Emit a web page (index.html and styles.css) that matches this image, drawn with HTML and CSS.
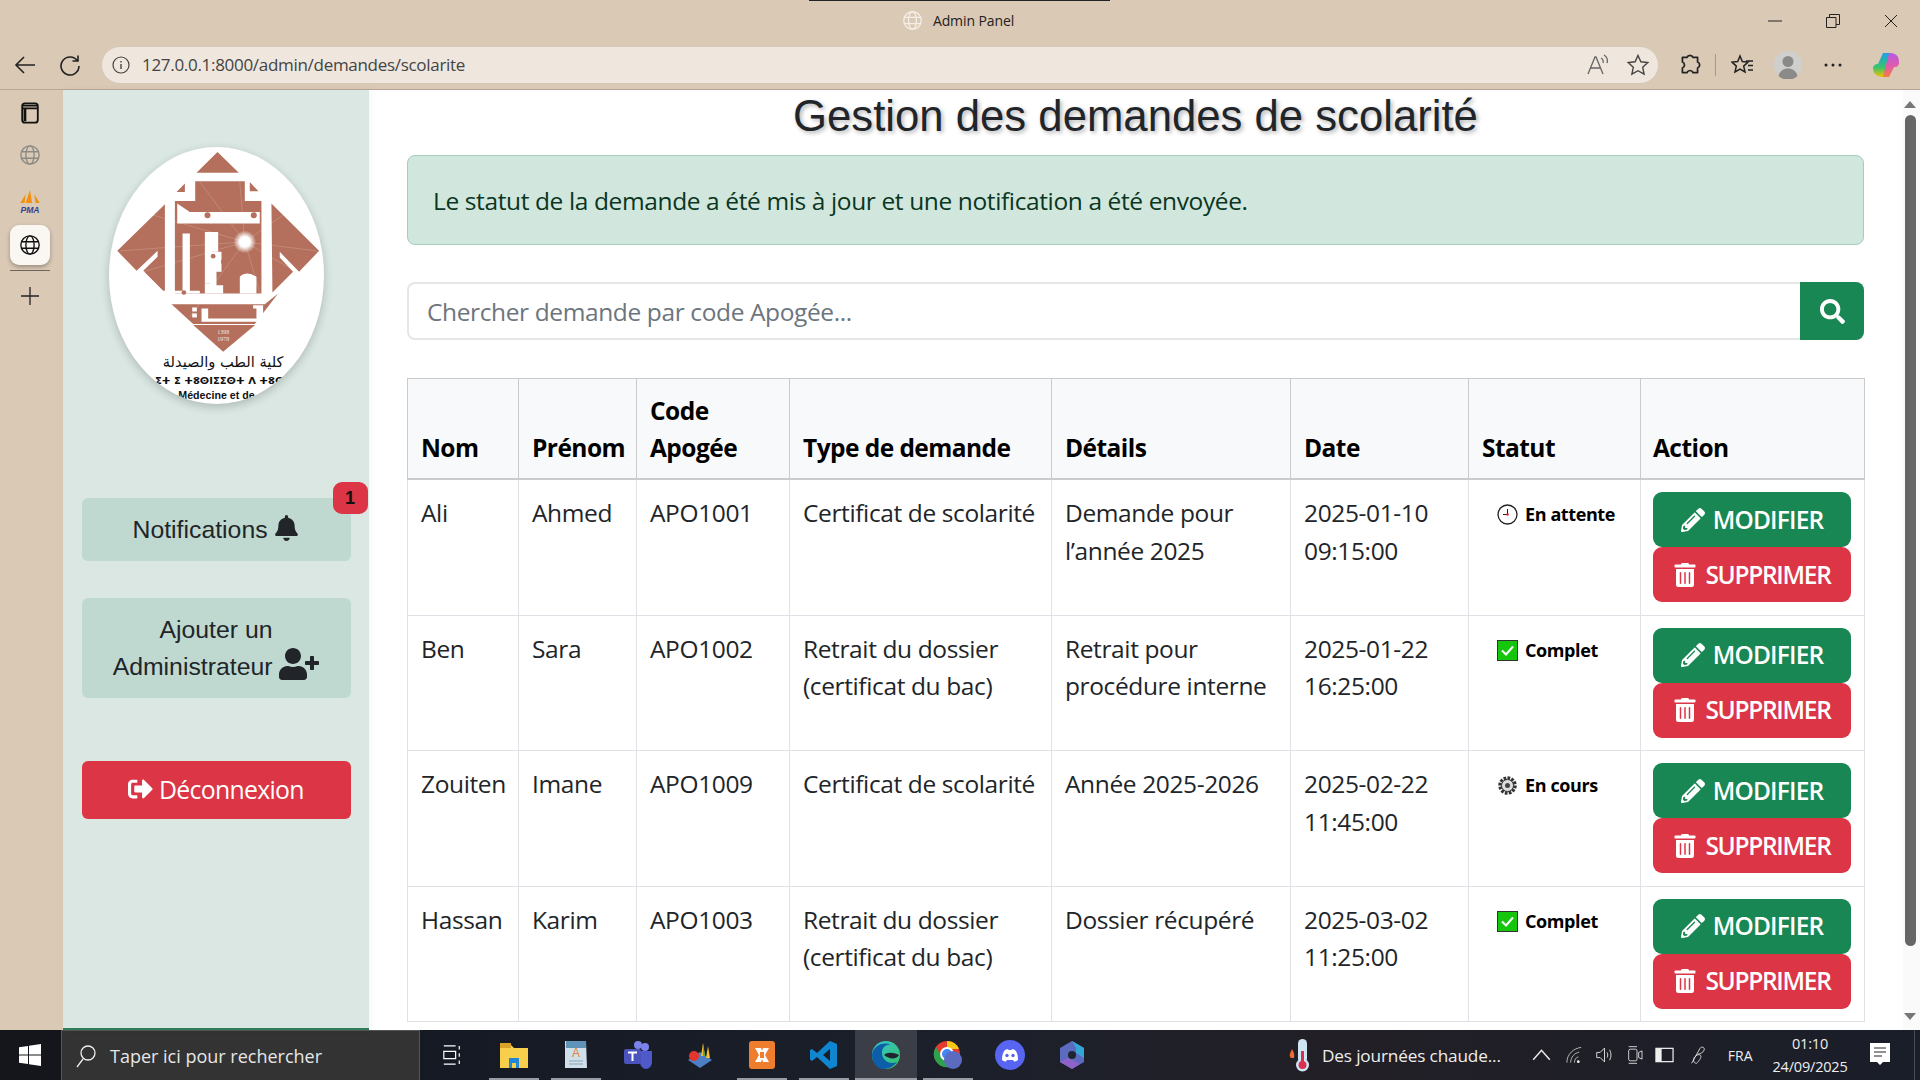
FILE: index.html
```html
<!DOCTYPE html>
<html lang="fr">
	<head>
		<meta charset="UTF-8" />
		<meta name="viewport" content="width=device-width, initial-scale=1.0" />
		<title>Admin Panel</title>
		<link rel="stylesheet" href="styles.css">
	</head>
	<body>
		<!-- icons used more than once -->
		<svg class="defs" aria-hidden="true">
			<symbol id="i-pen" viewBox="0 0 512 512"><path d="M497.9 142.1l-46.1 46.1c-4.7 4.7-12.3 4.7-17 0l-111-111c-4.7-4.7-4.7-12.3 0-17l46.1-46.1c18.7-18.7 49.1-18.7 67.9 0l60.1 60.1c18.8 18.7 18.8 49.1 0 67.9zM284.2 99.8L21.6 362.4.4 483.9c-2.9 16.4 11.4 30.6 27.8 27.8l121.5-21.3 262.6-262.6c4.7-4.7 4.7-12.3 0-17l-111-111c-4.8-4.7-12.4-4.7-17.1 0zM124.1 339.9c-5.5-5.5-5.5-14.3 0-19.8l154-154c5.5-5.5 14.3-5.5 19.8 0s5.5 14.3 0 19.8l-154 154c-5.5 5.5-14.3 5.5-19.8 0zM88 424h48v36.3l-64.5 11.3-31.1-31.1L51.7 376H88v48z"/></symbol>
			<symbol id="i-trash" viewBox="0 0 448 512"><path d="M32 464a48 48 0 0 0 48 48h288a48 48 0 0 0 48-48V128H32zm272-256a16 16 0 0 1 32 0v224a16 16 0 0 1-32 0zm-96 0a16 16 0 0 1 32 0v224a16 16 0 0 1-32 0zm-96 0a16 16 0 0 1 32 0v224a16 16 0 0 1-32 0zM432 32H312l-9.4-18.7A24 24 0 0 0 281.1 0H166.8a23.72 23.72 0 0 0-21.4 13.3L136 32H16A16 16 0 0 0 0 48v32a16 16 0 0 0 16 16h416a16 16 0 0 0 16-16V48a16 16 0 0 0-16-16z"/></symbol>
			<symbol id="i-globe" viewBox="0 0 24 24"><g fill="none" stroke="currentColor" stroke-width="1.5"><circle cx="12" cy="12" r="10"/><ellipse cx="12" cy="12" rx="4.5" ry="10"/><path d="M2.8 8.5h18.4M2.8 15.5h18.4"/></g></symbol>
			<symbol id="i-check" viewBox="0 0 21 21"><rect x=".5" y=".5" width="20" height="20" fill="#16c60c" stroke="#333"/><path d="M5 10.5l4 4 7-8" fill="none" stroke="#fff" stroke-width="2"/></symbol>
		</svg>

		<header class="chrome">
			<div class="titlebar">
				<span class="tab-mark"></span>
				<div class="title-center">
					<svg class="title-globe"><use href="#i-globe"/></svg>
					<span>Admin Panel</span>
				</div>
				<div class="win-btns">
					<svg viewBox="0 0 14 14"><path d="M0 7h14" stroke="#222" fill="none"/></svg>
					<svg viewBox="0 0 14 14"><path d="M.5 3.5h9.5v10H.5zM3.5 3.5V.5h10v10H10" stroke="#222" fill="none"/></svg>
					<svg viewBox="0 0 14 14"><path d="M1 1l12 12M13 1L1 13" stroke="#222" fill="none"/></svg>
				</div>
			</div>
			<div class="toolbar">
				<svg class="tool-ico back" viewBox="0 0 22 22"><path d="M21 11H2M10 3l-8 8 8 8" fill="none" stroke="#222" stroke-width="1.6"/></svg>
				<svg class="tool-ico reload" viewBox="0 0 22 22"><path d="M18.5 7A9 9 0 1 0 20 12M19 1.5V7h-5.5" fill="none" stroke="#222" stroke-width="1.6"/></svg>
				<div class="addressbar">
					<svg class="info-ico" viewBox="0 0 18 18"><circle cx="9" cy="9" r="8" fill="none" stroke="#444" stroke-width="1.2"/><path d="M9 8v5M9 5v1.6" stroke="#444" stroke-width="1.4"/></svg>
					<span class="url">127.0.0.1:8000/admin/demandes/scolarite</span>
					<svg class="addr-ico" viewBox="0 0 24 24"><path d="M2 21L9 4h1l7 17M4.5 15h10" fill="none" stroke="#666" stroke-width="1.3"/><path d="M15 5c2 1 2.500 3 2 5M18 2c3 2 4 5 3 8" fill="none" stroke="#666" stroke-width="1.3"/></svg>
					<svg class="addr-ico" viewBox="0 0 24 24"><path d="M12 2.500l2.900 6.300 6.900.8-5.100 4.700 1.400 6.800-6.100-3.400-6.100 3.400 1.400-6.800-5.100-4.700 6.900-.8z" fill="none" stroke="#444" stroke-width="1.4"/></svg>
				</div>
				<svg class="tool-ico ext" viewBox="0 0 24 24"><path d="M5 5h4.200a3 3 0 0 1 5.600 0H19v4.200a3 3 0 0 1 0 5.600V19h-4.200a3 3 0 0 0-5.600 0H5v-4.200a3 3 0 0 0 0-5.600z" fill="none" stroke="#222" stroke-width="1.6" stroke-linejoin="round"/></svg>
				<span class="tool-sep"></span>
				<svg class="tool-ico fav" viewBox="0 0 24 24"><path d="M9 3l2.300 5.500 5.700.6-4.300 4 1.300 5.900-5-3-5 3 1.300-5.900-4.300-4 5.700-.6z" fill="none" stroke="#222" stroke-width="1.5"/><path d="M15 8h7M17 12.500h5M17 17h5" stroke="#222" stroke-width="1.5"/></svg>
				<svg class="tool-ico avatar" viewBox="0 0 28 28"><circle cx="14" cy="14" r="14" fill="#cfcfcd"/><circle cx="14" cy="10.500" r="5.500" fill="#8a8a88"/><path d="M4.500 25c1-5 5-7.500 9.500-7.500s8.500 2.500 9.500 7.500a14 14 0 0 1-19 0z" fill="#8a8a88"/></svg>
				<svg class="tool-ico dots" viewBox="0 0 18 4"><circle cx="2" cy="2" r="1.500" fill="#222"/><circle cx="9" cy="2" r="1.500" fill="#222"/><circle cx="16" cy="2" r="1.500" fill="#222"/></svg>
				<svg class="tool-ico copilot" viewBox="0 0 28 28">
					<defs>
						<linearGradient id="cop1" x1="0" y1="0" x2="0" y2="1"><stop offset="0" stop-color="#1f9fe8"/><stop offset=".6" stop-color="#37c56b"/><stop offset="1" stop-color="#f2c200"/></linearGradient>
						<linearGradient id="cop2" x1="0" y1="0" x2="0" y2="1"><stop offset="0" stop-color="#b25be0"/><stop offset=".6" stop-color="#e85aa5"/><stop offset="1" stop-color="#f0803a"/></linearGradient>
					</defs>
					<path d="M11 2h7l-5 24c-6 0-11-1-12-8 0-4 3-5 5-5z" fill="url(#cop1)"/>
					<path d="M17 26h-6l6-24c6 0 10 2 10 9 0 5-3 5-5 5z" fill="url(#cop2)"/>
				</svg>
			</div>
		</header>

		<div class="window">
			<nav class="rail">
				<svg class="rail-ico rail-panel" viewBox="0 0 20 24"><rect x="1.500" y="1.500" width="17" height="21" rx="3" fill="none" stroke="#111" stroke-width="2"/><path d="M1.500 7h17M1.500 4h17" stroke="#111" stroke-width="2"/><path d="M3 7h3v14H3z" fill="#111"/></svg>
				<svg class="rail-ico rail-faded"><use href="#i-globe"/></svg>
				<svg class="rail-ico rail-pma" viewBox="0 0 24 24">
					<path d="M12 0l2 12H8zM8 4l-1 8H3zM16 4l1 8h4z" fill="#f29111"/>
					<text x="12" y="21" class="pma-text">PMA</text>
				</svg>
				<div class="rail-active"><svg class="rail-ico"><use href="#i-globe"/></svg></div>
				<span class="rail-line"></span>
				<svg class="rail-ico rail-plus" viewBox="0 0 20 20"><path d="M10 1v18M1 10h18" stroke="#222" stroke-width="1.300"/></svg>
			</nav>

			<aside class="sidebar">
				<div class="logo">
					<svg viewBox="58 50 644 772" width="215" height="257">
						<defs>
							<radialGradient id="sun"><stop offset=".45" stop-color="#fff"/><stop offset="1" stop-color="#fff" stop-opacity="0"/></radialGradient>
						</defs>
						<g fill="#b4705c">
							<path d="M383 65l64 62H320z"/>
							<path d="M260 185l25-25v25zM480 155l26 28h-26z"/>
							<path d="M225 222L82 362l58 60 63-60v18l-43 42 65 65z"/>
							<path d="M545 220l143 142-60 63-58-60v17l40 43-62 62z"/>
							<path d="M316 153h149v59h50v278h-260V212h61z"/>
							<path d="M245 522h280l40-32-70 92H310z"/>
							<path d="M310 585h186l-96 80z"/>
						</g>
						<g stroke="#fff" stroke-opacity=".35" stroke-width="1.500">
							<path d="M465 335L90 362M465 335L140 240M465 335L330 155M465 335L450 155M465 335L680 362M465 335L600 240M465 335L620 425M465 335L520 520M465 335L160 425M465 335L300 560"/>
						</g>
						<g fill="#fff">
							<path d="M262 220l38 25h210v35H262z"/>
							<path d="M278 310h22v172h30v8H215v-8h63zM345 305h40v60h-20v95h-20z"/>
							<path d="M355 365h40v60h-15v40h20v25h-55v-30h15v-55h-5z"/>
							<path d="M430 490h20v-50q20-20 50 0v50h-15z" />
							<path d="M335 535h20v30h145v-30h-10v-10h30v50H335z"/>
						</g>
						<circle cx="353" cy="255" r="9" fill="#b4705c"/>
						<circle cx="492" cy="255" r="9" fill="#b4705c"/>
						<circle cx="370" cy="378" r="7" fill="#b4705c"/>
						<circle cx="400" cy="395" r="7" fill="#b4705c"/>
						<circle cx="282" cy="487" r="7" fill="#b4705c"/>
						<rect x="307" y="532" width="14" height="12" fill="#fff"/>
						<rect x="307" y="550" width="14" height="12" fill="#fff"/>
						<circle cx="465" cy="335" r="34" fill="url(#sun)"/>
						<text x="400" y="612" class="logo-year">1398</text>
						<text x="400" y="632" class="logo-year">1978</text>
						<text x="400" y="710" class="logo-ar">كلية الطب والصيدلة</text>
						<text x="395" y="763" class="logo-tf">ⵉⵜ ⵉ ⵜⵓⵙⵏⵉⵉⵙⵜ ⴷ ⵜⵓⵙⵏ</text>
						<text x="380" y="806" class="logo-fr">Médecine et de</text>
					</svg>
				</div>

				<a class="side-btn side-notif">
					Notifications
					<svg class="side-ico" viewBox="0 0 448 512"><path d="M224 512c35.32 0 63.97-28.65 63.97-64H160.03c0 35.35 28.65 64 63.97 64zm215.39-149.71c-19.32-20.76-55.47-51.99-55.47-154.29 0-77.7-54.48-139.9-127.94-155.16V32c0-17.67-14.32-32-31.98-32s-31.98 14.33-31.98 32v20.84C118.56 68.1 64.08 130.3 64.08 208c0 102.3-36.15 133.53-55.47 154.29-6 6.45-8.66 14.16-8.61 21.71.11 16.4 12.98 32 32.1 32h383.8c19.12 0 32-15.6 32.1-32 .05-7.55-2.61-15.27-8.61-21.71z"/></svg>
					<span class="side-badge">1</span>
				</a>
				<a class="side-btn side-add">
					Ajouter un<br>Administrateur
					<svg class="side-ico side-ico-user" viewBox="0 0 640 512"><path d="M624 208h-64v-64c0-8.8-7.2-16-16-16h-32c-8.8 0-16 7.2-16 16v64h-64c-8.8 0-16 7.2-16 16v32c0 8.8 7.2 16 16 16h64v64c0 8.8 7.2 16 16 16h32c8.8 0 16-7.2 16-16v-64h64c8.8 0 16-7.2 16-16v-32c0-8.8-7.2-16-16-16zm-400 48c70.7 0 128-57.3 128-128S294.700 0 224 0 96 57.300 96 128s57.300 128 128 128zm89.600 32h-16.700c-22.200 10.200-46.900 16-72.900 16s-50.600-5.800-72.900-16h-16.700C60.200 288 0 348.200 0 422.400V464c0 26.500 21.500 48 48 48h352c26.500 0 48-21.500 48-48v-41.600c0-74.200-60.200-134.400-134.400-134.400z"/></svg>
				</a>
				<a class="side-btn side-logout">
					<svg class="side-ico" viewBox="0 0 512 512"><path d="M497 273L329 441c-15 15-41 4.500-41-17v-96H152c-13.300 0-24-10.700-24-24v-96c0-13.300 10.700-24 24-24h136V88c0-21.400 25.900-32 41-17l168 168c9.300 9.400 9.300 24.600 0 34zM192 436v-40c0-6.600-5.400-12-12-12H96c-17.700 0-32-14.300-32-32V160c0-17.700 14.300-32 32-32h84c6.600 0 12-5.400 12-12V76c0-6.600-5.400-12-12-12H96c-53 0-96 43-96 96v192c0 53 43 96 96 96h84c6.600 0 12-5.400 12-12z"/></svg>
					Déconnexion
				</a>
			</aside>

			<main class="main">
				<div class="content">
					<h1 class="page-title">Gestion des demandes de scolarité</h1>
					<div class="alert">Le statut de la demande a été mis à jour et une notification a été envoyée.</div>
					<form class="search">
						<input class="search-input" placeholder="Chercher demande par code Apogée...">
						<button class="search-btn" type="button">
							<svg viewBox="0 0 512 512"><path d="M505 442.700L405.300 343c-4.500-4.500-10.600-7-17-7H372c27.600-35.300 44-79.700 44-128C416 93.100 322.900 0 208 0S0 93.100 0 208s93.100 208 208 208c48.300 0 92.700-16.400 128-44v16.300c0 6.400 2.500 12.500 7 17l99.700 99.700c9.400 9.400 24.600 9.400 33.900 0l28.300-28.300c9.400-9.400 9.400-24.600.1-34zM208 336c-70.700 0-128-57.200-128-128 0-70.700 57.200-128 128-128 70.700 0 128 57.200 128 128 0 70.700-57.200 128-128 128z"/></svg>
						</button>
					</form>
					<table class="demandes">
						<colgroup>
							<col class="c-nom"><col class="c-prenom"><col class="c-code"><col class="c-type">
							<col class="c-details"><col class="c-date"><col class="c-statut"><col class="c-action">
						</colgroup>
						<thead>
							<tr>
								<th>Nom</th><th>Prénom</th><th>Code Apogée</th><th>Type de demande</th>
								<th>Détails</th><th>Date</th><th>Statut</th><th>Action</th>
							</tr>
						</thead>
						<tbody>
							<tr>
								<td>Ali</td><td>Ahmed</td><td>APO1001</td><td>Certificat de scolarité</td>
								<td>Demande pour l’année 2025</td><td>2025-01-10 09:15:00</td>
								<td>
									<span class="statut">
										<svg viewBox="0 0 21 21"><circle cx="10.500" cy="10.500" r="9.500" fill="#fff" stroke="#222" stroke-width="1.300"/><path d="M10.500 5v5.500H6" fill="none" stroke="#222"/><circle cx="10.500" cy="10.500" r="1.300" fill="#d22"/></svg>
										En attente
									</span>
								</td>
								<td class="td-action">
									<a class="btn btn-edit"><svg><use href="#i-pen"/></svg>MODIFIER</a>
									<a class="btn btn-del"><svg><use href="#i-trash"/></svg>SUPPRIMER</a>
								</td>
							</tr>
							<tr>
								<td>Ben</td><td>Sara</td><td>APO1002</td><td>Retrait du dossier (certificat du bac)</td>
								<td>Retrait pour procédure interne</td><td>2025-01-22 16:25:00</td>
								<td><span class="statut"><svg><use href="#i-check"/></svg>Complet</span></td>
								<td class="td-action">
									<a class="btn btn-edit"><svg><use href="#i-pen"/></svg>MODIFIER</a>
									<a class="btn btn-del"><svg><use href="#i-trash"/></svg>SUPPRIMER</a>
								</td>
							</tr>
							<tr>
								<td>Zouiten</td><td>Imane</td><td>APO1009</td><td>Certificat de scolarité</td>
								<td>Année 2025-2026</td><td>2025-02-22 11:45:00</td>
								<td>
									<span class="statut">
										<svg viewBox="0 0 21 21"><circle cx="10.500" cy="10.500" r="7.500" fill="#ddd" stroke="#333" stroke-width="3.500" stroke-dasharray="2.600 1.300"/><circle cx="10.500" cy="10.500" r="6" fill="#ddd" stroke="#333"/><circle cx="10.500" cy="10.500" r="2.500" fill="#444"/></svg>
										En cours
									</span>
								</td>
								<td class="td-action">
									<a class="btn btn-edit"><svg><use href="#i-pen"/></svg>MODIFIER</a>
									<a class="btn btn-del"><svg><use href="#i-trash"/></svg>SUPPRIMER</a>
								</td>
							</tr>
							<tr>
								<td>Hassan</td><td>Karim</td><td>APO1003</td><td>Retrait du dossier (certificat du bac)</td>
								<td>Dossier récupéré</td><td>2025-03-02 11:25:00</td>
								<td><span class="statut"><svg><use href="#i-check"/></svg>Complet</span></td>
								<td class="td-action">
									<a class="btn btn-edit"><svg><use href="#i-pen"/></svg>MODIFIER</a>
									<a class="btn btn-del"><svg><use href="#i-trash"/></svg>SUPPRIMER</a>
								</td>
							</tr>
						</tbody>
					</table>
				</div>
				<div class="scrollbar">
					<span class="arrow-up"></span>
					<span class="thumb"></span>
					<span class="arrow-down"></span>
				</div>
			</main>
		</div>

		<footer class="taskbar">
			<div class="start">
				<svg viewBox="0 0 22 22"><path d="M0 3.200l9-1.300v8.500H0zM10 1.800L22 0v10.400H10zM0 11.500h9V20l-9-1.300zM10 11.500h12V22l-12-1.800z" fill="#fff"/></svg>
			</div>
			<div class="task-search">
				<svg viewBox="0 0 20 24"><circle cx="12" cy="9" r="7" fill="none" stroke="#eee" stroke-width="1.300"/><path d="M7 15l-6 8" stroke="#eee" stroke-width="1.300"/></svg>
				<span>Taper ici pour rechercher</span>
			</div>
			<div class="task-apps">
				<div class="app"><svg viewBox="0 0 22 24"><path d="M2 2h13M2 22h13M2 8h13v8H2zM19 2v4M19 10v4M19 18v4" fill="none" stroke="#fff" stroke-width="1.300"/></svg></div>
				<div class="app open"><svg viewBox="0 0 30 30"><path d="M1 5h11l3 3h14v20H1z" fill="#f8cf4a"/><path d="M1 3h11v5H1z" fill="#d9a32a"/><path d="M10 18h10v10h-3v-5h-4v5h-3z" fill="#1f87d6"/></svg></div>
				<div class="app open"><svg viewBox="0 0 30 30"><path d="M4 1h21l1 27H4z" fill="#cfe0ea"/><path d="M5 1h20v7H5z" fill="#5f93b8"/><text x="15" y="17" class="doc-a">A</text><path d="M8 21h14M8 24h14" stroke="#8aa6b8"/></svg></div>
				<div class="app"><svg viewBox="0 0 30 30"><circle cx="22" cy="7" r="4" fill="#7b83eb"/><circle cx="15" cy="5" r="4" fill="#7b83eb"/><path d="M17 11h12v11c0 4-3 7-6 7s-6-3-6-7z" fill="#5059c9"/><rect x="1" y="9" width="17" height="15" rx="2" fill="#4b53bc"/><path d="M5 12.500h9M9.500 12.500V21" stroke="#fff" stroke-width="2"/></svg></div>
				<div class="app"><svg viewBox="0 0 30 30"><path d="M3 20l12-8 12 8-12 8z" fill="#4d7fc4"/><path d="M18 3l2 13h-4zM23 6l2 12h-4z" fill="#f2c230"/><path d="M18 3l2 13h-2z" fill="#4caf50"/><circle cx="9" cy="16" r="5" fill="#e2362c"/></svg></div>
				<div class="app open"><svg viewBox="0 0 30 30"><rect x="2" y="1" width="26" height="28" rx="3" fill="#ee7d2e"/><path d="M8 8h6l1 3 1-3h6l-4 7 4 7h-6l-1-3-1 3H8l4-7z" fill="#fff"/><rect x="13" y="12" width="4" height="6" fill="#ee7d2e"/></svg></div>
				<div class="app open"><svg viewBox="0 0 30 30"><path d="M21 1l7 3v22l-7 3-13-12-5 4-2-1.500V10L3 9l5 4zM21 9l-7 6 7 6z" fill="#0e87d0"/></svg></div>
				<div class="app active"><svg viewBox="0 0 30 30"><defs><linearGradient id="edge" x1="0" y1="0" x2="1" y2="1"><stop offset="0" stop-color="#36c6d3"/><stop offset="1" stop-color="#35c163"/></linearGradient></defs><circle cx="15" cy="15" r="14" fill="url(#edge)"/><path d="M1 15C2 6 12 1 20 5c-6-1-9 3-9 8 0 7 7 12 15 9-4 5-9 7-14 7C6 29 1 22 1 15z" fill="#0c5ea8"/><path d="M13 15c3-3 9-3 15 0-2 4-9 5-15 0z" fill="#1f2630"/></svg></div>
				<div class="app open"><svg viewBox="0 0 30 30"><circle cx="14" cy="14" r="13" fill="#e33b2e"/><path d="M14 1a13 13 0 0 1 12 8H14z" fill="#f5c518"/><path d="M3 7l7 12 6 8A13 13 0 0 1 3 7z" fill="#2ca24c"/><circle cx="14" cy="14" r="6" fill="#4285f4" stroke="#fff" stroke-width="2"/><circle cx="20" cy="20" r="9" fill="#5b6bc0"/></svg></div>
				<div class="app"><svg viewBox="0 0 30 30"><circle cx="15" cy="15" r="15" fill="#5865f2"/><path d="M7 20c0-5 1-8 3-10 2-1 3-1 3-1l.5 1h3l.5-1s1 0 3 1c2 2 3 5 3 10-1.500 1-3 1.500-4 1.500l-1-1.500H12l-1 1.500C10 21.500 8.500 21 7 20z" fill="#fff"/><circle cx="12" cy="15.500" r="1.700" fill="#5865f2"/><circle cx="18" cy="15.500" r="1.700" fill="#5865f2"/></svg></div>
				<div class="app"><svg viewBox="0 0 30 30"><path d="M15 1l12 7v14l-12 7-12-7V8z" fill="#5c6bc0"/><path d="M15 1l12 7v10l-8-5V8z" fill="#35a7d6"/><path d="M3 22l12 7 8-5-12-6z" fill="#8d63c9"/><circle cx="15" cy="15" r="4" fill="#1f2630"/></svg></div>
			</div>
			<div class="task-right">
				<div class="weather">
					<svg viewBox="0 0 24 34"><path d="M4 20c-3-3 0-6 1-9 1 2 3 4 2 9z" fill="#ef6c2e"/><rect x="11" y="1" width="9" height="24" rx="4.500" fill="#cfe6f3"/><circle cx="15.500" cy="27" r="6.500" fill="#cfe6f3"/><rect x="14" y="13" width="3" height="12" fill="#d9304f"/><circle cx="15.500" cy="27" r="4" fill="#d9304f"/></svg>
					<span>Des journées chaude...</span>
				</div>
				<div class="tray">
					<svg class="tray-caret" viewBox="0 0 16 10"><path d="M1 9l7-8 7 8" fill="none" stroke="#eee" stroke-width="1.200"/></svg>
					<svg viewBox="0 0 20 20"><path d="M2 18C2 9 9 3 17 2M6 18c0-6 4-10 9-11M10 18c0-3 1-5 4-6" fill="none" stroke="#bbb"/><circle cx="14" cy="17" r="1.500" fill="#eee"/></svg>
					<svg viewBox="0 0 22 22"><path d="M2 8h4l5-5v16l-5-5H2z" fill="none" stroke="#eee"/><path d="M14 8c1 2 1 4 0 6M17 5c2 4 2 8 0 12" fill="none" stroke="#eee"/></svg>
					<svg viewBox="0 0 20 24"><rect x="3" y="5" width="10" height="14" rx="2" fill="none" stroke="#eee"/><path d="M3 2h10M3 22h10M15 9l4-2v10l-4-2z" fill="none" stroke="#eee"/></svg>
					<svg viewBox="0 0 20 16"><rect x="1" y="1" width="18" height="14" fill="none" stroke="#eee" stroke-width="1.300"/><rect x="1" y="1" width="6" height="14" fill="#eee"/></svg>
					<svg class="tray-pen" viewBox="0 0 22 24"><path d="M4 22L14 4c2-3 6-1 5 2-1 3-5 5-8 5M10 22c-4 0-5-5-2-8s6-3 7-1-3 7-5 9" fill="none" stroke="#eee"/></svg>
				</div>
				<span class="lang">FRA</span>
				<div class="clock"><span>01:10</span><span>24/09/2025</span></div>
				<svg class="notif-ico" viewBox="0 0 20 24"><path d="M0 0h20v19h-7l-3 3-3-3H0z" fill="#fff"/><path d="M4 5h12M4 9h12M4 13h8" stroke="#222"/></svg>
				<span class="show-desktop"></span>
			</div>
		</footer>
	</body>
</html>
```

FILE: styles.css
```css
html, body {
	margin: 0;
	height: 100%;
	overflow: hidden;
}
body {
	display: flex;
	flex-direction: column;
	height: 1080px;
	background: #dac9b5;
	color: #212529;
	font-family: "Open Sans", "Noto Sans", sans-serif;
}
.defs {
	display: none;
}

/* browser chrome */
.chrome {
	height: 90px;
	box-sizing: border-box;
	border-bottom: 1px solid #b8a692;
	flex: none;
}
.titlebar {
	position: relative;
	height: 46px;
	display: flex;
	justify-content: center;
	align-items: center;
}
.tab-mark {
	position: absolute;
	top: 0;
	left: 809px;
	width: 301px;
	height: 1px;
	background: #222;
}
.title-center {
	display: flex;
	align-items: center;
	gap: 10px;
	font-size: 14px;
	letter-spacing: -0.1px;
	margin: -5px 4px 0 0;
	color: #222;
}
.title-globe {
	width: 21px;
	height: 21px;
	color: #f5efe7;
}
.win-btns {
	position: absolute;
	top: 14px;
	right: 22px;
	display: flex;
	gap: 44px;
}
.win-btns svg {
	width: 14px;
	height: 14px;
}
.toolbar {
	height: 38px;
	display: flex;
	align-items: center;
}
.tool-ico {
	flex: none;
}
.back {
	width: 22px;
	height: 22px;
	margin-left: 14px;
}
.reload {
	width: 22px;
	height: 22px;
	margin-left: 23px;
}
.addressbar {
	width: 1558px;
	height: 38px;
	box-sizing: border-box;
	margin-left: 20px;
	padding: 0 8px 0 10px;
	flex: none;
	display: flex;
	align-items: center;
	background: #efe7dd;
	border: 1px solid #d5c8b6;
	border-radius: 19px;
}
.info-ico {
	width: 18px;
	height: 18px;
}
.url {
	margin: -2px 0 0 12px;
	flex: 1;
	font-size: 17px;
	letter-spacing: -0.3px;
	color: #444;
}
.addr-ico {
	width: 24px;
	height: 24px;
	margin-left: 16px;
}
.ext {
	width: 26px;
	height: 26px;
	margin-left: 18px;
}
.tool-sep {
	width: 1px;
	height: 22px;
	margin-left: 12px;
	background: #a69988;
}
.fav {
	width: 24px;
	height: 24px;
	margin-left: 15px;
}
.avatar {
	width: 28px;
	height: 28px;
	margin-left: 19px;
}
.dots {
	width: 18px;
	height: 4px;
	margin-left: 22px;
}
.copilot {
	width: 28px;
	height: 28px;
	margin-left: 30px;
}

.window {
	flex: 1;
	display: flex;
	min-height: 0;
}

/* vertical tabs */
.rail {
	width: 63px;
	flex: none;
	display: flex;
	flex-direction: column;
	align-items: center;
	padding: 12px 3px 0 0;
	box-sizing: border-box;
}
.rail-ico {
	width: 22px;
	height: 22px;
	color: #111;
	flex: none;
	display: block;
}
.rail-faded {
	margin-top: 20px;
	color: #8b8a84;
}
.rail-pma {
	margin-top: 24px;
	width: 26px;
	height: 26px;
}
.pma-text {
	font-family: "Liberation Sans", sans-serif;
	font-size: 8px;
	font-weight: bold;
	font-style: italic;
	fill: #36418f;
	text-anchor: middle;
}
.rail-active {
	width: 40px;
	height: 40px;
	margin-top: 8.500px;
	display: flex;
	align-items: center;
	justify-content: center;
	background: #faf7f3;
	border-radius: 9px;
	box-shadow: 0 2px 4px rgba(0, 0, 0, 0.3);
}
.rail-line {
	width: 40px;
	height: 1px;
	margin-top: 5px;
	background: #6f655a;
}
.rail-plus {
	width: 20px;
	height: 20px;
	margin-top: 15px;
}

/* sidebar */
.sidebar {
	position: relative;
	width: 306px;
	flex: none;
	display: flex;
	flex-direction: column;
	align-items: center;
	box-sizing: border-box;
	padding-top: 57px;
	background: #dae7e2;
	border-bottom: 2px solid #2f7d5a;
	box-shadow: 2px 0 8px rgba(0, 0, 0, 0.04);
}
.logo {
	width: 215px;
	height: 257px;
	border-radius: 50%;
	overflow: hidden;
	background: #fff;
	box-shadow: 0 3px 10px rgba(0, 0, 0, 0.2);
	flex: none;
}
.logo svg {
	display: block;
}
.logo-year {
	font-family: "Liberation Serif", serif;
	font-size: 18px;
	fill: #f4e4dd;
	text-anchor: middle;
}
.logo-ar {
	font-family: "DejaVu Sans", sans-serif;
	font-size: 44px;
	fill: #111;
	text-anchor: middle;
}
.logo-tf {
	font-family: "DejaVu Sans", sans-serif;
	font-size: 30px;
	font-weight: bold;
	fill: #111;
	text-anchor: middle;
}
.logo-fr {
	font-family: "Liberation Sans", sans-serif;
	font-size: 32px;
	font-weight: bold;
	fill: #111;
	text-anchor: middle;
}
.side-btn {
	position: relative;
	width: 269px;
	box-sizing: border-box;
	display: block;
	text-align: center;
	border-radius: 6px;
	font-family: "Liberation Sans", sans-serif;
	font-size: 24.800px;
	line-height: 37px;
}
.side-notif {
	margin-top: 94px;
	height: 63px;
	padding-top: 13px;
	background: #c0d9d0;
}
.side-add {
	margin-top: 37px;
	height: 100px;
	padding-top: 13px;
	background: #c0d9d0;
}
.side-logout {
	margin-top: 63px;
	height: 58px;
	padding-top: 10px;
	background: #dc3545;
	color: #fff;
	font-family: "Open Sans", sans-serif;
	letter-spacing: -0.7px;
}
.side-ico {
	height: 26px;
	width: 25px;
	vertical-align: -3px;
	fill: currentColor;
}
.side-ico-user {
	width: 40px;
	height: 32px;
	vertical-align: -5px;
}
.side-badge {
	position: absolute;
	top: -16px;
	right: -17px;
	width: 35px;
	height: 32px;
	border-radius: 9px;
	background: #dc3545;
	color: #111;
	font-size: 18px;
	font-weight: bold;
	line-height: 32px;
	text-align: center;
}

/* page */
.main {
	flex: 1;
	display: flex;
	min-width: 0;
	background: #fff;
}
.content {
	flex: 1;
	min-width: 0;
	padding: 0 39px 0 38px;
	font-size: 24.5px;
	letter-spacing: -0.38px;
	line-height: 37.500px;
	color: #212529;
}
.page-title {
	margin: 0;
	height: 52px;
	font-family: "Liberation Sans", sans-serif;
	font-size: 43.700px;
	font-weight: normal;
	line-height: 52px;
	letter-spacing: 0;
	text-align: center;
	text-shadow: 2px 2px 4px rgba(0, 0, 0, 0.3);
}
.alert {
	margin-top: 13px;
	height: 90px;
	box-sizing: border-box;
	padding: 26px 25px;
	background: #d1e7dd;
	border: 1px solid #a3cfbb;
	border-radius: 8px;
	color: #0a3622;
}
.search {
	margin-top: 37px;
	display: flex;
	height: 58px;
}
.search-input {
	flex: 1;
	min-width: 0;
	box-sizing: border-box;
	padding: 2px 18px 0;
	border: 2px solid #e4e6e8;
	border-right: none;
	border-radius: 8px 0 0 8px;
	font: inherit;
	letter-spacing: inherit;
	outline: none;
}
.search-input::placeholder {
	color: #6c757d;
}
.search-btn {
	width: 64px;
	padding: 0;
	border: none;
	border-radius: 0 8px 8px 0;
	background: #198754;
}
.search-btn svg {
	width: 25px;
	height: 25px;
	fill: #fff;
	display: block;
	margin: 0 auto;
}
.demandes {
	margin-top: 38px;
	width: 1457px;
	table-layout: fixed;
	border-collapse: collapse;
}
.c-nom { width: 111px; }
.c-prenom { width: 118px; }
.c-code { width: 153px; }
.c-type { width: 262px; }
.c-details { width: 239px; }
.c-date { width: 178px; }
.c-statut { width: 172px; }
.c-action { width: 224px; }
.demandes th {
	padding: 12.500px 13px 11.500px;
	background: #f8f9fa;
	border: 2px solid #c9cbcd;
	border-width: 1px 1px 2px 1px;
	color: #000;
	font-weight: 700;
	letter-spacing: -0.55px;
	text-align: left;
	vertical-align: bottom;
}
.demandes th:last-child {
	padding-left: 12px;
}
.demandes td {
	padding: 14px 13px 12.500px;
	border: 1px solid #dee2e6;
	vertical-align: top;
}
.demandes .td-action {
	padding: 12px 13px 12.500px 12px;
}
.statut {
	display: flex;
	align-items: center;
	gap: 7px;
	margin: 2px 0 0 15px;
	font-size: 18px;
	font-weight: 700;
	letter-spacing: -0.4px;
	color: #000;
}
.statut svg {
	width: 21px;
	height: 21px;
	flex: none;
}
.btn {
	height: 55px;
	display: flex;
	align-items: center;
	justify-content: center;
	gap: 8px;
	border-radius: 9px;
	color: #fff;
	font-weight: 600;
	letter-spacing: -0.8px;
}
.btn svg {
	width: 24px;
	height: 24px;
	fill: #fff;
}
.btn-edit {
	background: #198754;
}
.btn-del {
	background: #dc3545;
	letter-spacing: -1.3px;
}

/* fake scrollbar */
.scrollbar {
	width: 17px;
	flex: none;
	display: flex;
	flex-direction: column;
	align-items: center;
	box-sizing: border-box;
	padding: 11px 3px 0 0;
	background: #fafafa;
}
.arrow-up {
	width: 0;
	height: 0;
	border: 6px solid transparent;
	border-top: none;
	border-bottom: 7px solid #777;
}
.thumb {
	width: 11px;
	height: 831px;
	margin-top: 7px;
	border-radius: 6px;
	background: #666;
}
.arrow-down {
	width: 0;
	height: 0;
	margin-top: 67px;
	border: 6px solid transparent;
	border-bottom: none;
	border-top: 7px solid #777;
}

/* windows taskbar */
.taskbar {
	height: 50px;
	flex: none;
	display: flex;
	background: linear-gradient(90deg, #10141d, #1c202b 50%, #221f26 70%, #1a1e29);
	color: #eee;
}
.start {
	width: 61px;
	flex: none;
	display: flex;
	align-items: center;
	justify-content: center;
	padding-right: 2px;
	box-sizing: border-box;
	background: #14161c;
}
.start svg {
	width: 22px;
	height: 22px;
}
.task-search {
	width: 359px;
	flex: none;
	box-sizing: border-box;
	display: flex;
	align-items: center;
	gap: 14px;
	padding-left: 14px;
	background: #333;
	border: 1px solid #555;
	border-width: 1px 1px 0 1px;
	font-size: 18px;
	color: #e6e6e6;
}
.task-search svg {
	width: 20px;
	height: 24px;
}
.task-apps {
	display: flex;
	margin-left: 1px;
}
.app {
	position: relative;
	width: 62px;
	display: flex;
	align-items: center;
	justify-content: center;
}
.app svg {
	width: 30px;
	height: 30px;
}
.app:first-child svg {
	width: 20px;
	height: 22px;
}
.app.open::after,
.app.active::after {
	content: "";
	position: absolute;
	left: 6px;
	right: 6px;
	bottom: 0;
	height: 2px;
	background: #9a9ca3;
}
.app.active {
	background: #3b3e47;
}
.app.active::after {
	left: 0;
	right: 0;
}
.doc-a {
	font-family: "Liberation Sans", sans-serif;
	font-size: 12px;
	fill: #e8823a;
	text-anchor: middle;
}
.task-right {
	flex: 1;
	display: flex;
	align-items: center;
	min-width: 0;
	margin-left: 184px;
}
.weather {
	display: flex;
	align-items: center;
	gap: 11px;
	font-size: 17.200px;
	letter-spacing: -0.15px;
	white-space: nowrap;
}
.weather svg {
	width: 24px;
	height: 34px;
}
.tray {
	margin-left: 31px;
	display: flex;
	align-items: center;
	gap: 11px;
}
.tray svg {
	width: 19px;
	height: 20px;
}
.tray .tray-caret {
	margin-right: 3px;
}
.tray .tray-pen {
	margin-left: 3px;
}
.lang {
	margin-left: 21px;
	font-size: 14px;
}
.clock {
	margin-left: 20px;
	display: flex;
	flex-direction: column;
	align-items: center;
	font-size: 14.5px;
	line-height: 23px;
	letter-spacing: -0.2px;
}
.notif-ico {
	width: 20px;
	height: 24px;
	margin-left: 22px;
}
.show-desktop {
	align-self: stretch;
	margin-left: auto;
	width: 5px;
	border-left: 1px solid #4a4d55;
}
```
